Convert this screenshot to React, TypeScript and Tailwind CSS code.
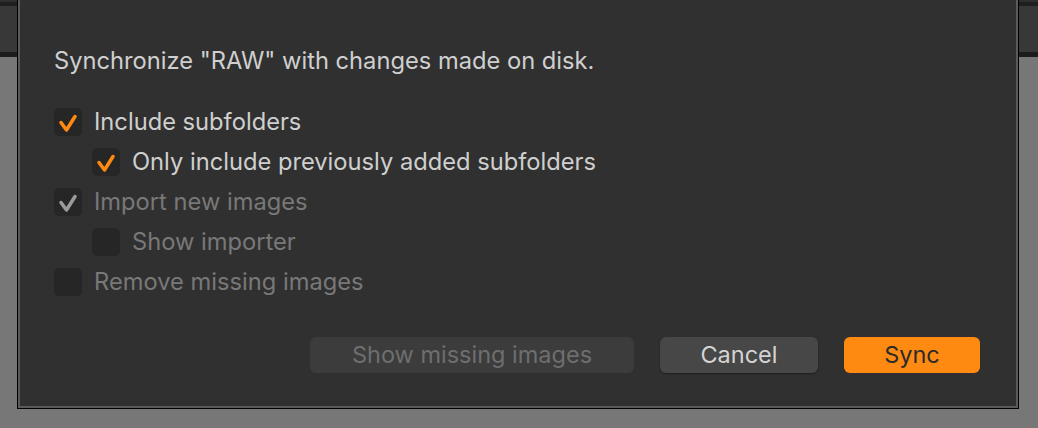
import React from 'react';

const font = { fontFamily: 'Inter, "Noto Sans", "Liberation Sans", sans-serif' };

function Check({ color }: { color: string }) {
  return (
    <svg width="28" height="28" viewBox="0 0 28 28" fill="none">
      <path
        d="M7 14.5 L12.5 22 L21 8.5"
        stroke={color}
        strokeWidth="3.5"
        strokeLinecap="round"
        strokeLinejoin="round"
      />
    </svg>
  );
}

function Option({
  label,
  checked,
  disabled,
  indent,
}: {
  label: string;
  checked?: boolean;
  disabled?: boolean;
  indent?: boolean;
}) {
  return (
    <div className={`flex h-10 items-center gap-3 ${indent ? 'pl-[38px]' : ''}`}>
      <div className="flex h-7 w-7 shrink-0 items-center justify-center rounded-[5px] bg-[#262626]">
        {checked && <Check color={disabled ? '#9a9a9a' : '#ff8a12'} />}
      </div>
      <span className={`text-[23.7px] leading-[28px] ${disabled ? 'text-[#787878]' : 'text-[#cfcfcf]'}`}>
        {label}
      </span>
    </div>
  );
}

export default function App() {
  return (
    <div className="relative h-[428px] w-[1038px] overflow-hidden bg-[#777777]" style={font}>
      {/* window behind the sheet */}
      <div className="flex flex-col">
        <div className="h-[2px] bg-[#2e2e2e]" />
        <div className="h-[4px] bg-[#1f1f1f]" />
        <div className="h-[46px] bg-[#383838]" />
        <div className="h-[5px] bg-[#1c1c1c]" />
      </div>

      {/* sheet */}
      <div className="absolute left-[17px] top-0 h-[409px] w-[1002px] border-x border-b border-black">
        <div className="flex h-full flex-col border-x-2 border-b-2 border-[#5a5a5a] bg-[#303030] px-[34px] pt-[47px]">
          <p className="text-[23.7px] leading-[28px] text-[#cfcfcf]">
            Synchronize "RAW" with changes made on disk.
          </p>

          <div className="mt-[27px] flex flex-col">
            <Option label="Include subfolders" checked />
            <Option label="Only include previously added subfolders" checked indent />
            <Option label="Import new images" checked disabled />
            <Option label="Show importer" disabled indent />
            <Option label="Remove missing images" disabled />
          </div>

          <div className="mt-[35px] flex justify-end gap-[26px] pr-[2px]">
            <button className="h-9 w-[324px] rounded-[6px] bg-[#3c3c3c] text-[23.5px] leading-none text-[#6e6e6e]">
              Show missing images
            </button>
            <button className="h-9 w-[158px] rounded-[6px] bg-[#474747] text-[23.5px] leading-none text-[#d4d4d4] shadow-[0_1px_2px_rgba(0,0,0,0.4)]">
              Cancel
            </button>
            <button className="h-9 w-[136px] rounded-[6px] bg-[#ff8a12] text-[23.5px] leading-none text-[#2b2b2b]">
              Sync
            </button>
          </div>
        </div>
      </div>
    </div>
  );
}
